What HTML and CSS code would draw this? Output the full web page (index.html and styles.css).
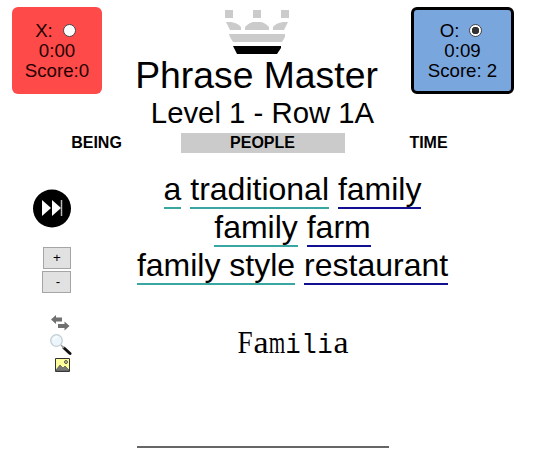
FILE: index.html
```html
<!DOCTYPE html>
<html lang="en">
<head>
<meta charset="utf-8">
<title>Phrase Master</title>
<link rel="stylesheet" href="styles.css">
</head>
<body>
<header class="header">
  <section class="card card-x">
    <div class="pick">X: <span class="radio"></span></div>
    <div>0:00</div>
    <div>Score:0</div>
  </section>
  <div class="heading">
    <svg class="crown" width="64" height="44" viewBox="0 0 64 44">
      <g fill="#cbcbcb">
        <path d="M0 0h8v8H0zM28 0h8v8h-8zM56 0h8v8h-8z"/>
        <path d="M1 12h5q7 1 10 5v3H5zM20 20v-3q5-5 9-5h6q4 0 9 5v3zM63 12h-5q-7 1-10 5v3h11z"/>
        <path d="M4 24h56v3l-3 5H8l-3-5z"/>
      </g>
      <path d="M8 36h48v2l-4 6H12l-3-6z"/>
    </svg>
    <h1 class="title">Phrase Master</h1>
    <h2 class="level">Level 1 - Row 1A</h2>
  </div>
  <section class="card card-o">
    <div class="pick">O: <span class="radio checked"></span></div>
    <div>0:09</div>
    <div>Score: 2</div>
  </section>
</header>
<nav class="tabs">
  <div class="tab">BEING</div>
  <div class="tab active">PEOPLE</div>
  <div class="tab">TIME</div>
</nav>
<main class="main">
  <aside class="tools">
    <svg class="skip" width="40" height="40" viewBox="0 0 40 40">
      <circle cx="20" cy="19.500" r="19"/>
      <path fill="#fff" d="M10 11l9 8-9 8zM20 11l9 8-9 8z"/>
      <path stroke="#bbb" stroke-width="1.500" d="M29.500 11v16"/>
    </svg>
    <button class="step plus">+</button>
    <button class="step minus">-</button>
    <svg class="swap" width="19" height="16" viewBox="0 0 19 16">
      <path fill="#707070" d="M0 4.500l5-4.500v2.500h6v4H5V9zM18.500 11l-5-4.500V9H7v4h6.500v2.500z"/>
    </svg>
    <svg class="lens" width="22" height="22" viewBox="0 0 22 22">
      <path stroke="#111" stroke-width="3" stroke-linecap="round" d="M14 14l6 5.500"/>
      <path stroke="#999" stroke-width="1.500" d="M11 11l3 3"/>
      <circle cx="6.500" cy="6.500" r="5.800" fill="#eaf6fc" stroke="#c3ced4" stroke-width="1.300"/>
      <path d="M3.500 6q1-3 4-3" fill="none" stroke="#fff" stroke-width="1.500"/>
    </svg>
    <svg class="photo" width="15" height="14" viewBox="0 0 15 14">
      <path fill="#ffff9c" stroke="#333" d="M.5.5h14v13H.5z"/>
      <path fill="#777" stroke="#444" stroke-width=".6" d="M1 12l4-5 3 3 2-2 4 4v1H1z"/>
      <circle cx="11" cy="4" r="1.500" fill="#cc9" stroke="#333" stroke-width=".8"/>
    </svg>
  </aside>
  <div class="content">
    <div class="phrases">
      <div class="phrase"><span class="teal">a</span> <span class="teal">traditional</span> <span class="navy">family</span></div>
      <div class="phrase"><span class="teal">family</span> <span class="navy">farm</span></div>
      <div class="phrase"><span class="teal">family style</span> <span class="navy">restaurant</span></div>
    </div>
    <div class="answer"><span class="cap">F</span><span class="round">a</span><span class="wide">m</span><span class="thin">i</span><span class="thin">l</span><span class="thin">i</span><span class="round">a</span></div>
    <div class="rule"></div>
  </div>
</main>
</body>
</html>
```
FILE: styles.css
```css
* { box-sizing: border-box; }
body {
  margin: 0;
  width: 533px;
  height: 465px;
  overflow: hidden;
  background: #fff;
  color: #000;
  font-family: "Liberation Sans", Arial, sans-serif;
}
.header {
  display: grid;
  grid-template-columns: 90px 309px 103px;
  padding: 7px 0 0 12px;
  height: 133px;
}
.card {
  height: 87px;
  padding-top: 14px;
  border-radius: 6px;
  text-align: center;
  font-size: 18.67px;
  line-height: 20px;
  white-space: nowrap;
}
.card-x { background: #ff4a4a; color: #210000; }
.card-o {
  background: #7aa6de;
  border: 3px solid #000;
  padding-top: 11px;
}
.pick {
  display: flex;
  justify-content: center;
  align-items: center;
  gap: 10px;
  padding-right: 3px;
}
.radio {
  width: 13px;
  height: 13px;
  margin-top: -1px;
  border: 1px solid #444;
  border-radius: 50%;
  background: #fff;
}
.checked { background: radial-gradient(circle, #333 0 3.5px, #fff 4px); }
.heading {
  display: flex;
  flex-direction: column;
  align-items: center;
  padding-top: 3px;
}
.crown { display: block; flex: none; }
.title, .level { margin: 0; font-weight: normal; white-space: nowrap; }
.title { font-size: 37.33px; line-height: 42px; }
.level { font-size: 29.33px; line-height: 34px; margin: 0 0 0 12px; }
.tabs {
  display: grid;
  grid-template-columns: repeat(3, 164px);
  gap: 2px;
  margin-left: 15px;
}
.tab {
  height: 20px;
  padding-right: 1px;
  text-align: center;
  font-size: 16px;
  font-weight: bold;
  line-height: 19px;
}
.active { background: #cbcbcb; }
.main { display: flex; }
.tools {
  width: 130px;
  padding: 36px 0 0 32px;
  display: flex;
  flex-direction: column;
  align-items: flex-start;
}
.tools svg { display: block; }
.step {
  height: 22px;
  padding: 0;
  border: 1px solid #a5a5a5;
  background: #e1e1e1;
  color: #000;
  font: 13.33px/18px "Liberation Sans", Arial, sans-serif;
}
.plus { width: 28px; margin: 18px 0 2px 11px; }
.minus { width: 29px; margin-left: 10px; padding-left: 3px; }
.swap { margin: 22px 0 0 19px; }
.lens { margin: 3px 0 0 18px; }
.photo { margin: 2px 0 0 23px; }
.content {
  width: 326px;
  padding-top: 17px;
}
.phrases { padding-right: 1px; text-align: center; font-size: 32px; line-height: 38px; }
.phrase { height: 38px; white-space: nowrap; }
.phrase span {
  display: inline-block;
  height: 39px;
  border-bottom: 2px solid;
  border-color: #3aa6a2;
}
.phrase .navy { border-color: #101090; }
.answer {
  width: 112px;
  margin: 39px auto 0;
  display: grid;
  grid-template-columns: repeat(7, 16px);
  align-items: baseline;
  font-family: "Liberation Serif", serif;
  font-size: 32px;
  line-height: 38px;
  height: 38px;
}
.answer span { display: flex; justify-content: center; }
.cap { transform: scaleX(.85); }
.round { transform: scaleX(1.06); }
.wide { transform: scaleX(.66); }
.answer .thin {
  font-family: "Liberation Mono", monospace;
  font-size: 28px;
  line-height: 32px;
  transform: scaleX(.9);
}
.rule {
  width: 252px;
  height: 2px;
  margin: 85px 0 0 7px;
  background: #666;
}
```
